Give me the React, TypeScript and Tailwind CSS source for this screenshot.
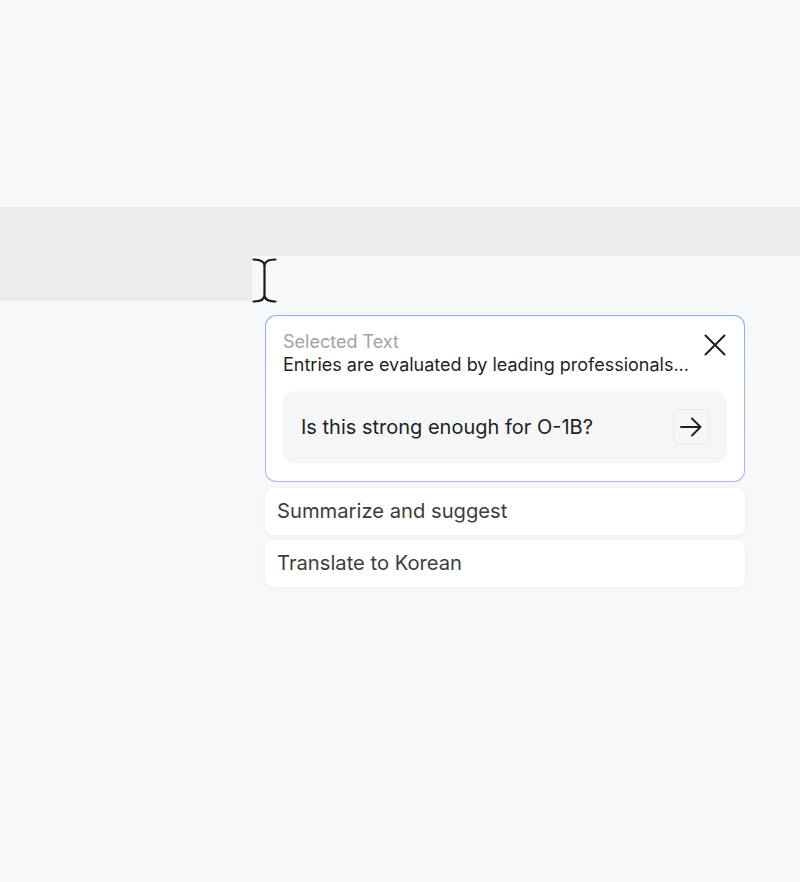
function TextCursor() {
  return (
    <svg width="25" height="45" viewBox="0 0 25 45" fill="none" className="mt-[2px] -mb-[2px]">
      <path
        d="M1.5 1.5C8 1.5 12.5 3.5 12.5 8V37C12.5 41.5 8 43.5 1.5 43.5M23.5 1.5C17 1.5 12.5 3.5 12.5 8M23.5 43.5C17 43.5 12.5 41.5 12.5 37"
        stroke="#1c1c1c"
        strokeWidth="2.2"
        strokeLinecap="round"
      />
    </svg>
  );
}

function CloseIcon() {
  return (
    <svg width="22" height="22" viewBox="0 0 22 22" fill="none">
      <path d="M1.5 1.5L20.5 20.5M20.5 1.5L1.5 20.5" stroke="#1f1f1f" strokeWidth="2" strokeLinecap="round" />
    </svg>
  );
}

function SendArrow() {
  return (
    <svg width="22" height="20" viewBox="0 0 22 20" fill="none">
      <path
        d="M1 10H20.5M12 1.5L20.5 10L12 18.5"
        stroke="#1f1f1f"
        strokeWidth="1.9"
        strokeLinecap="round"
        strokeLinejoin="round"
      />
    </svg>
  );
}

export default function App() {
  const suggestions = ['Summarize and suggest', 'Translate to Korean'];

  return (
    <div className="min-h-[882px] bg-[#f7f8fa] pt-[207px] font-['Inter',sans-serif]">
      <div className="h-[49px] w-full bg-[#ececee]" />
      <div className="flex items-start">
        <div className="h-[45px] w-[252px] bg-[#ececee]" />
        <TextCursor />
      </div>

      <div className="ml-[265px] mt-[14px] w-[480px]">
        <div className="rounded-[11px] bg-gradient-to-b from-[#88b1f6] to-[#c6a4f8] p-px">
          <div className="rounded-[10px] bg-white px-[17px] pt-[14px] pb-[18px]">
            <div className="flex items-start justify-between">
              <div className="min-w-0">
                <p className="text-[18px] leading-[23px] text-[#a3a3a3]">Selected Text</p>
                <p className="text-[18px] leading-[23px] text-[#1f1f1f]">
                  Entries are evaluated by leading professionals...
                </p>
              </div>
              <button className="mt-[4px] mr-[1px]">
                <CloseIcon />
              </button>
            </div>
            <div className="mt-[15px] flex h-[72px] items-center justify-between rounded-[12px] bg-[#f5f6f8] pl-[18px] pr-[18px]">
              <span className="text-[20px] text-[#1f1f1f]">Is this strong enough for O-1B?</span>
              <button className="flex h-9 w-9 items-center justify-center rounded-md border border-[#e6e7ea] bg-[#f5f6f8]">
                <SendArrow />
              </button>
            </div>
          </div>
        </div>

        <div className="mt-[6px] flex flex-col gap-[5px]">
          {suggestions.map((s) => (
            <div
              key={s}
              className="flex h-[47px] items-center rounded-lg bg-white pl-3 text-[20.2px] text-[#3d3d3d] shadow-[0_1px_4px_rgba(0,0,0,0.05)]"
            >
              {s}
            </div>
          ))}
        </div>
      </div>
    </div>
  );
}
